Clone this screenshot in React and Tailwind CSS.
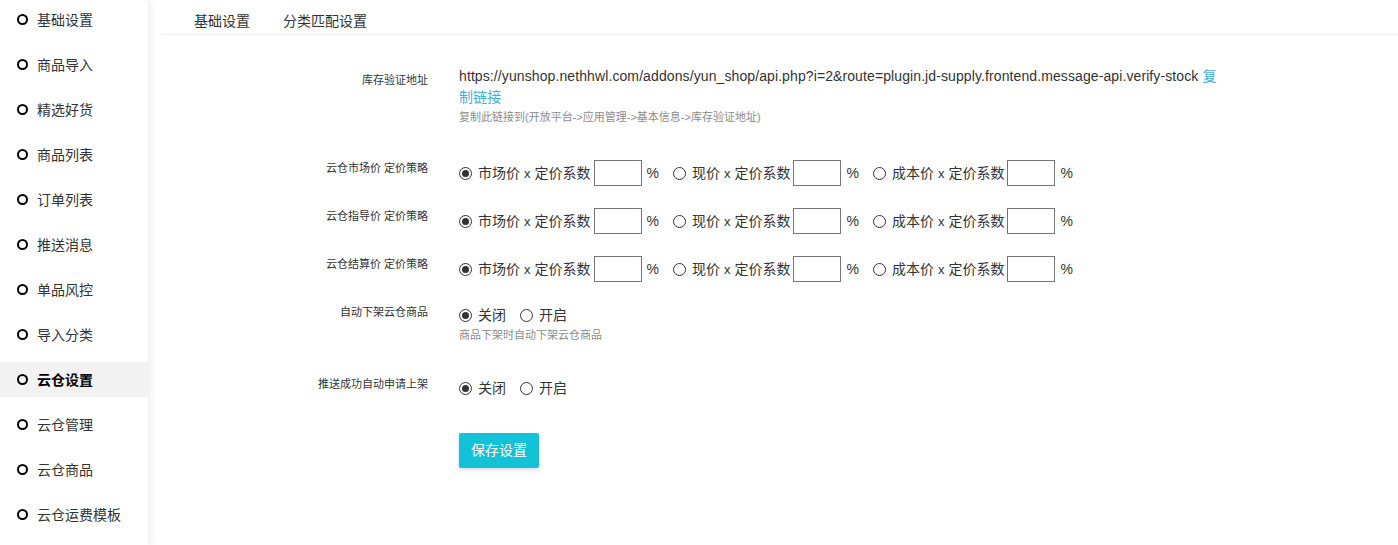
import React from "react";

const menu = [
  "基础设置",
  "商品导入",
  "精选好货",
  "商品列表",
  "订单列表",
  "推送消息",
  "单品风控",
  "导入分类",
  "云仓设置",
  "云仓管理",
  "云仓商品",
  "云仓运费模板",
];

const priceRows = ["云仓市场价 定价策略", "云仓指导价 定价策略", "云仓结算价 定价策略"];

const cjk = { fontFamily: '"Liberation Sans", "Noto Sans CJK SC", sans-serif' };

const Radio = ({ checked }) => (
  <span className="w-[13px] h-[13px] rounded-full border border-[#333] flex items-center justify-center shrink-0 bg-white">
    {checked && <span className="w-[7px] h-[7px] rounded-full bg-[#333]" />}
  </span>
);

const PriceOption = ({ checked, label, first }) => (
  <div className={`flex items-center ${first ? "" : "ml-[14px]"}`}>
    <Radio checked={checked} />
    <span className="ml-[6px] text-[14px] leading-[20px] text-[#333]">
      {label}
      <span className="mx-[4px] text-[13px]">x</span>
      定价系数
    </span>
    <input className="ml-[3px] w-[48px] h-[26px] border border-[#767676] outline-none" />
    <span className="ml-[5px] text-[14px] text-[#333]">%</span>
  </div>
);

const Switch = () => (
  <div className="flex items-center text-[14px] leading-[20px] text-[#333]">
    <Radio checked />
    <span className="ml-[6px]">关闭</span>
    <span className="ml-[14px]">
      <Radio />
    </span>
    <span className="ml-[6px]">开启</span>
  </div>
);

const App = () => {
  return (
    <div className="flex w-full h-[545px] overflow-hidden bg-white text-[#333]" style={cjk}>
      <div className="w-[148px] shrink-0 pt-[2px] bg-white shadow-[3px_0_8px_rgba(0,0,0,0.07)] z-10">
        {menu.map((m, i) => (
          <div
            key={i}
            className={`h-[35px] mb-[10px] flex items-center ${i === 8 ? "bg-[#f2f2f2] font-bold text-black" : ""}`}
          >
            <span className="ml-[17px] w-[11px] h-[11px] rounded-full border-2 border-black" />
            <span className="ml-[9px] text-[14px] leading-[20px]">{m}</span>
          </div>
        ))}
      </div>

      <div className="flex-1 pl-[14px]">
        <div className="h-[35px] border-b border-[#eee] flex pl-[16px] pt-[11px] text-[14px] leading-[20px] text-[#333]">
          <span className="px-[16px]">基础设置</span>
          <span className="px-[17px]">分类匹配设置</span>
        </div>

        <div className="pt-[31px]">
          <div className="flex">
            <div className="w-[266px] shrink-0 text-right text-[11px] leading-[16px] pt-[6px]">库存验证地址</div>
            <div className="ml-[31px] w-[765px]">
              <div className="text-[14px] leading-[21px] text-[#333] tracking-[0.1px]">
                https://yunshop.nethhwl.com/addons/yun_shop/api.php?i=2&amp;route=plugin.jd-supply.frontend.message-api.verify-stock{" "}
                <span className="text-[#3fb0d9]">复制链接</span>
              </div>
              <div className="text-[11px] leading-[16px] text-[#8c8c8c] mt-[1px]">
                复制此链接到(开放平台-&gt;应用管理-&gt;基本信息-&gt;库存验证地址)
              </div>
            </div>
          </div>

          <div className="mt-[24px]">
            {priceRows.map((r, i) => (
              <div key={i} className="flex h-[48px]">
                <div className="w-[266px] shrink-0 text-right text-[11px] leading-[16px] mt-[11px]">{r}</div>
                <div className="ml-[31px] flex items-center">
                  <PriceOption checked first label="市场价" />
                  <PriceOption label="现价" />
                  <PriceOption label="成本价" />
                </div>
              </div>
            ))}
          </div>

          <div className="flex mt-[11px]">
            <div className="w-[266px] shrink-0 text-right text-[11px] leading-[16px]">自动下架云仓商品</div>
            <div className="ml-[31px] pt-[1px]">
              <Switch />
              <div className="text-[11px] leading-[16px] text-[#8c8c8c] mt-[2px]">商品下架时自动下架云仓商品</div>
            </div>
          </div>

          <div className="flex mt-[33px]">
            <div className="w-[266px] shrink-0 text-right text-[11px] leading-[16px]">推送成功自动申请上架</div>
            <div className="ml-[31px] pt-[2px]">
              <Switch />
            </div>
          </div>

          <div className="ml-[297px] mt-[35px]">
            <button className="w-[80px] h-[35px] bg-[#13c2d7] text-white text-[14px] rounded-[2px] shadow-[0_2px_4px_rgba(0,0,0,0.15)]">
              保存设置
            </button>
          </div>
        </div>
      </div>
    </div>
  );
};

export default App;
